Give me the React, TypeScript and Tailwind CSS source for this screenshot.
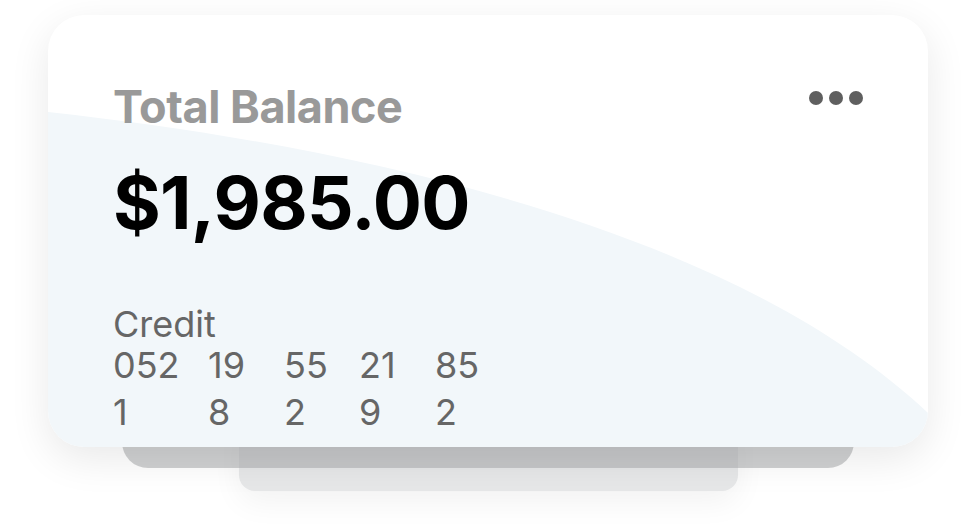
const groups = [
  ['052', '1'],
  ['19', '8'],
  ['55', '2'],
  ['21', '9'],
  ['85', '2'],
]

function Dots() {
  return (
    <div className="mt-[7px] flex gap-[6px]">
      <span className="h-[14px] w-[14px] rounded-full bg-[#5f5f5f]" />
      <span className="h-[14px] w-[14px] rounded-full bg-[#5f5f5f]" />
      <span className="h-[14px] w-[14px] rounded-full bg-[#5f5f5f]" />
    </div>
  )
}

export default function App() {
  return (
    <div
      className="flex h-[528px] w-[976px] flex-col items-center bg-white pt-[15px]"
      style={{ fontFamily: 'Inter, "Noto Sans", sans-serif' }}
    >
      {/* main balance card */}
      <div className="relative z-20 h-[432px] w-[880px] overflow-hidden rounded-[36px] bg-white shadow-[0_12px_40px_rgba(0,0,0,0.09)]">
        <svg className="absolute inset-0" width="880" height="432" viewBox="0 0 880 432">
          <path d="M0,97 C300,130 680,210 880,398 L880,432 L0,432 Z" fill="#f2f7fa" />
        </svg>

        <div className="relative flex flex-col px-[65px] pt-[69px]">
          <div className="flex items-start justify-between">
            <h2 className="text-[45px] font-bold leading-none tracking-[-0.01em] text-[#999999]">
              Total Balance
            </h2>
            <Dots />
          </div>

          <p className="mt-[37px] text-[73px] font-bold leading-none tracking-[-0.01em] text-black">
            $1,985.00
          </p>

          <p className="mt-[67px] text-[36px] leading-none text-[#666666]">Credit</p>
          <div className="grid grid-cols-[95px_76px_75px_76px_auto] text-[36px] leading-[47px] text-[#666666]">
            {groups.map((g, i) => (
              <div key={i} className="flex flex-col">
                <span>{g[0]}</span>
                <span>{g[1]}</span>
              </div>
            ))}
          </div>
        </div>
      </div>

      {/* stacked cards behind */}
      <div className="relative z-10 -mt-[40px] h-[61px] w-[732px] rounded-b-[26px] bg-[rgba(175,176,179,0.6)]" />
      <div className="relative z-0 -mt-[61px] h-[84px] w-[499px] rounded-b-[16px] bg-[#e6e7e8] shadow-[0_12px_30px_rgba(0,0,0,0.05)]" />
    </div>
  )
}
